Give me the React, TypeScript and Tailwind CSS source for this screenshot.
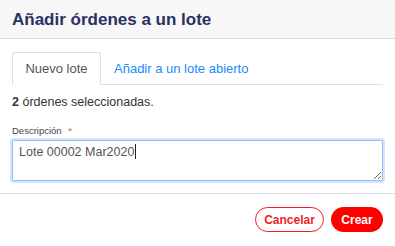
import { useState } from "react";

export default function App() {
  const [tab, setTab] = useState<"nuevo" | "abierto">("nuevo");
  const [desc, setDesc] = useState("Lote 00002 Mar2020");

  return (
    <div className="w-[395px] h-[246px] bg-white font-['Liberation_Sans',Arial,sans-serif]">
      {/* Header */}
      <div className="h-[39px] bg-[#f7f7f8] border-b border-[#dedde6] flex items-center px-3">
        <h1 className="text-[17px] font-bold text-[#2a3163] leading-none">Añadir órdenes a un lote</h1>
      </div>

      <div className="px-3 pt-[13px]">
        {/* Tabs */}
        <div className="flex border-b border-[#dedde3] h-[33px]">
          <button
            onClick={() => setTab("nuevo")}
            className={
              tab === "nuevo"
                ? "w-[89px] h-[33px] -mb-px border border-[#dedde3] border-b-white rounded-t-[3px] bg-white text-[13px] text-[#555]"
                : "w-[89px] h-[33px] text-[13px] text-[#1a8bf9]"
            }
          >
            Nuevo lote
          </button>
          <button
            onClick={() => setTab("abierto")}
            className={
              tab === "abierto"
                ? "px-[13px] h-[33px] -mb-px border border-[#dedde3] border-b-white rounded-t-[3px] bg-white text-[13px] text-[#555]"
                : "px-[13px] h-[33px] text-[13px] text-[#1a8bf9]"
            }
          >
            Añadir a un lote abierto
          </button>
        </div>

        <p className="mt-[10px] text-[12.5px] text-[#333] leading-[15px]">
          <span className="font-bold">2</span> órdenes seleccionadas.
        </p>

        <label className="block mt-[15px] text-[9.5px] text-[#444] leading-[12px]">
          Descripción <span className="text-[#e5484d] ml-1">*</span>
        </label>
        <div className="relative mt-[3px]">
          <textarea
            value={desc}
            onChange={(e) => setDesc(e.target.value)}
            className="block w-full h-[41px] border border-[#8fc1f5] ring-2 ring-[#d5e6fa] outline-none rounded-[1px] px-[6px] py-[3px] text-[12.5px] leading-[16px] text-[#555] font-['Liberation_Sans',Arial,sans-serif]"
          />
          {/* caret shown in the focused field */}
          <span className="absolute left-[123px] top-[4px] w-px h-[15px] bg-[#222] pointer-events-none" />
        </div>
      </div>

      <div className="mt-[12px] border-t border-[#dedde3]" />

      {/* Footer */}
      <div className="flex justify-end gap-[7px] px-3 pt-[13px]">
        <button className="w-[69px] h-[25px] rounded-full border border-[#f01f1f] text-[#f01f1f] text-[12px] font-bold bg-white">
          Cancelar
        </button>
        <button className="w-[52px] h-[25px] rounded-full bg-[#ff0000] text-white text-[12px] font-bold">
          Crear
        </button>
      </div>
    </div>
  );
}
